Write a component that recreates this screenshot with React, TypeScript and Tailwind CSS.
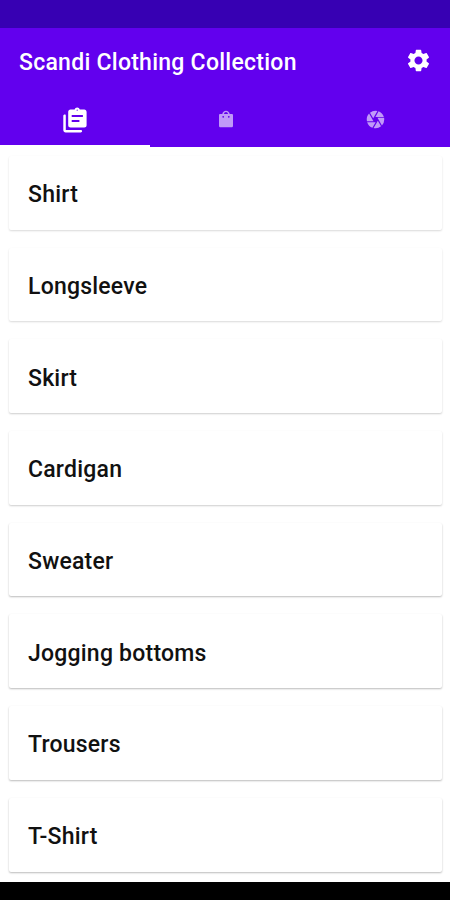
import { clsx } from "clsx";
import { MdCamera, MdSettings } from "react-icons/md";

const items = [
  "Shirt",
  "Longsleeve",
  "Skirt",
  "Cardigan",
  "Sweater",
  "Jogging bottoms",
  "Trousers",
  "T-Shirt",
];

// clipboard with a second sheet peeking out behind it
function AssignmentsIcon() {
  return (
    <svg viewBox="0 0 24 26" className="h-[26px] w-6" fill="currentColor" aria-hidden>
      <path d="M2 7.5H1.6C.9 7.5.3 8.1.3 8.8V23c0 1.4 1 2.4 2.4 2.4h15.1c.7 0 1.3-.6 1.3-1.2s-.6-1.2-1.3-1.2H2.8V8.6c0-.6-.3-1.1-.8-1.1z" />
      <path
        fillRule="evenodd"
        d="M21.2 2.6h-4.4C16.4 1.2 15.4.4 14.2.4s-2.2.8-2.6 2.2H7.5C6.2 2.6 5.2 3.6 5.2 5v13.2c0 1.3 1 2.3 2.3 2.3h13.7c1.4 0 2.4-1 2.4-2.3V5c0-1.4-1-2.4-2.4-2.4zM14.2 2.6a.6.6 0 1 1 0 1.2.6.6 0 0 1 0-1.2zM8.7 8.1h11.2v2H8.7v-2zm0 4.9h7.7v2H8.7v-2z"
      />
    </svg>
  );
}

function BagIcon() {
  return (
    <svg viewBox="0 0 16 18" className="h-[18px] w-4" fill="currentColor" aria-hidden>
      <path
        fillRule="evenodd"
        d="M13.8 4.1h-2.1C11.4 2.1 9.9.7 8 .7S4.6 2.1 4.3 4.1H2.2c-.7 0-1.2.5-1.2 1.2v10.4c0 .9.7 1.6 1.6 1.6h10.8c.9 0 1.6-.7 1.6-1.6V5.3c0-.7-.5-1.2-1.2-1.2zM8 2.1c1 0 1.8.8 2.1 2H5.9c.3-1.2 1.1-2 2.1-2zM5.2 5.9a.9.9 0 1 1 0 1.8.9.9 0 0 1 0-1.8zm5.6 0a.9.9 0 1 1 0 1.8.9.9 0 0 1 0-1.8z"
      />
    </svg>
  );
}

export default function App() {
  return (
    <div className="flex h-[900px] w-[450px] flex-col overflow-hidden bg-white font-['Roboto',sans-serif]">
      <div className="h-7 shrink-0 bg-[#3700b3]" />

      <header className="flex h-[119px] shrink-0 flex-col bg-[#6200ee] text-white">
        <div className="flex h-[65px] items-center justify-between pl-[19px] pr-[18px]">
          <h1 className="pt-[5px] text-[23px] font-medium tracking-[0.26px]">
            Scandi Clothing Collection
          </h1>
          <MdSettings className="h-[27px] w-[27px]" />
        </div>
        <nav className="grid flex-1 grid-cols-3">
          <button className="flex items-center justify-center border-b-2 border-white pt-px">
            <AssignmentsIcon />
          </button>
          <button className="flex items-center justify-center pb-0.5 pl-px text-white/60">
            <BagIcon />
          </button>
          <button className="flex items-center justify-center pb-0.5 text-white/60">
            <MdCamera className="h-[21px] w-[21px]" />
          </button>
        </nav>
      </header>

      <main className="flex flex-1 flex-col gap-[18px] pl-[9px] pr-2 pt-[9px]">
        {items.map((item, i) => (
          <div
            key={item}
            className={clsx(
              "flex h-[73.7px] shrink-0 items-center rounded-[2px] bg-white pl-[19px] pt-[5.5px] text-[23px] font-medium tracking-[0.22px] text-[#111]",
              // cards further down the list cast a stronger shadow
              i < 2
                ? "shadow-[0_1px_2px_rgba(0,0,0,0.15)]"
                : i < 4
                  ? "shadow-[0_1px_2px_rgba(0,0,0,0.2)]"
                  : "shadow-[0_1px_2px_rgba(0,0,0,0.27)]",
            )}
          >
            {item}
          </div>
        ))}
      </main>

      <footer className="h-[18px] shrink-0 bg-black" />
    </div>
  );
}
